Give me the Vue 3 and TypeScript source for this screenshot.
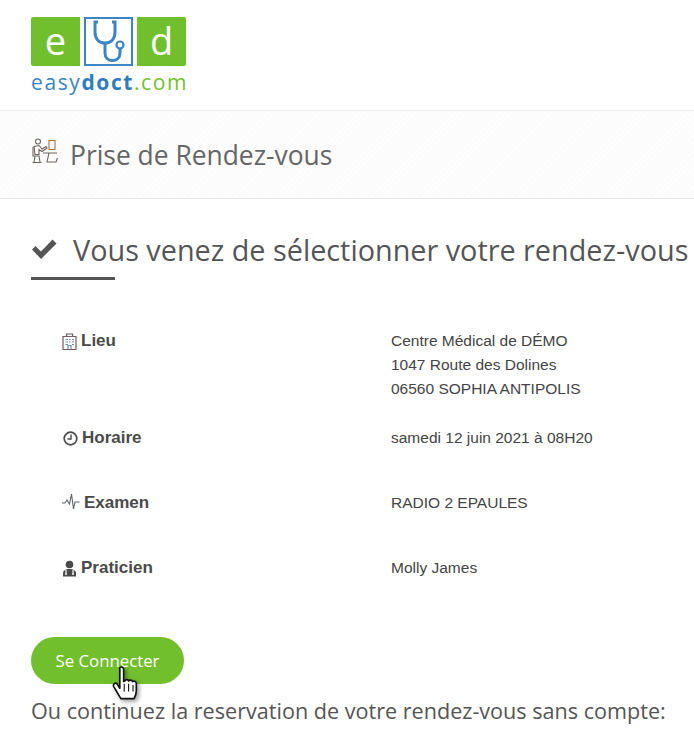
<template>
  <div class="page">
    <header class="top">
      <div class="logo">
        <div class="logo-tiles">
          <span class="tile tile-green tile-left">e</span>
          <span class="tile tile-blue">
            <svg width="45" height="45" viewBox="0 0 45 45" fill="none" stroke="#3b84c6" stroke-width="3">
              <path d="M12 3H9v10c0 7 4 11 10 11s10-4 10-11V3h-3" />
              <path d="M19 24v10c0 4.500 3 7.500 7.500 7.500S34 38.500 34 34v-4" />
              <circle cx="34" cy="26" r="3.500" stroke-width="2.200" />
            </svg>
          </span>
          <span class="tile tile-green tile-right">d</span>
        </div>
        <div class="logo-name"><span>easy</span><b>doct</b><span class="name-com">.com</span></div>
      </div>
    </header>

    <section class="band">
      <svg class="band-icon" width="27" height="26" viewBox="0 0 27 26" fill="none" stroke="#6d6460" stroke-width="1.100">
        <circle cx="7" cy="3.500" r="2.500" />
        <path d="M3 8.500l5-1 3 3.500 4-2.500 1 1.500-5 3.500-3-2v5H4z" />
        <path d="M2 9v9h6l1 6M4 18l-1 6M1.500 24.500h9" />
        <path d="M12 15h14M18 15l-2 9h9l1.500-4" />
        <path d="M18 2.500h6v9h-6z" stroke="#a8723f" />
      </svg>
      <h2 class="band-title">Prise de Rendez-vous</h2>
    </section>

    <main class="content">
      <h1 class="heading">
        <svg class="check" width="26" height="22" viewBox="0 0 26 22">
          <path d="M1 11.500l3.500-3.500 5.500 5.500L21.500 1.500 25.500 5.500 10 21z" fill="#555" />
        </svg>
        <span>Vous venez de sélectionner votre rendez-vous</span>
      </h1>
      <div class="rule"></div>

      <div class="details">
        <div v-for="row in rows" :key="row.label" class="row" :class="row.cls">
          <div class="label">
            <svg v-if="row.icon === 'building'" width="15" height="17" viewBox="0 0 15 17" fill="none" stroke="#6a5a5a" stroke-width="1.200">
              <path d="M1 3.500h13v13H1z" stroke="#7a5a60" />
              <path d="M4.500 3.500V1h6v2.500" />
              <path d="M3.500 6.500h2.500M7 6.500h1.500M10 6.500h2M3.500 9h2.500M7 9h1.500M10 9h2M3.500 11.500h2.500M10 11.500h2M6 16v-3.500h3V16" stroke="#6f8fb0" />
            </svg>
            <svg v-else-if="row.icon === 'clock'" width="16" height="15" viewBox="-1 0 16 15" fill="none" stroke="#4a4a4a" stroke-width="1.700">
              <circle cx="7.500" cy="7.500" r="6.300" />
              <path d="M8 3.500v4.500H4.500" stroke-width="1.400" />
            </svg>
            <svg v-else-if="row.icon === 'pulse'" class="pulse" width="18" height="17" viewBox="0 0 18 17" fill="none" stroke="#5f6468" stroke-width="1.100">
              <path d="M0 10h3l2-3 2.500 4L9.500 1l2 15 1.500-7h4.500" />
            </svg>
            <svg v-else width="15" height="17" viewBox="0 0 15 17">
              <circle cx="7.500" cy="4.500" r="3.800" fill="#4a4a4a" />
              <path d="M1 16.500v-3c0-3 2.500-4.500 6.500-4.500s6.500 1.500 6.500 4.500v3z" fill="#4a4a4a" />
              <path d="M4 10v3M11 10v3" stroke="#fff" stroke-width="1.200" />
              <circle cx="4" cy="14" r="1" fill="#fff" />
              <circle cx="11" cy="14" r="1" fill="#fff" />
            </svg>
            <span>{{ row.label }}</span>
          </div>
          <div class="value">
            <div v-for="line in row.lines" :key="line">{{ line }}</div>
          </div>
        </div>
      </div>

      <a class="connect">Se Connecter</a>
      <p class="note">Ou continuez la reservation de votre rendez-vous sans compte:</p>

      <svg class="cursor" width="33" height="42" viewBox="0 0 30 38">
        <path d="M8 2.500c1.500-1.500 3.500-.5 3.500 1.500v11l1-.5c1-2 3-1.500 3.500 0 1-1.500 3-1 3.500.5 1.500-1 3-.5 3.500 1.500v7c0 3-1 5-2 7H9l-6.500-11c-1-2 1.500-4 3-2.500L8 21z" fill="#fff" stroke="#111" stroke-width="1.500" stroke-linejoin="round" />
        <path d="M12 17v7M16 17v7M20 18v6" stroke="#111" stroke-width="1" />
      </svg>
    </main>
  </div>
</template>

<script setup lang="ts">
interface DetailRow {
  label: string
  icon: string
  lines: string[]
  cls: string
}

const rows: DetailRow[] = [
  {
    label: 'Lieu',
    icon: 'building',
    lines: ['Centre Médical de DÉMO', '1047 Route des Dolines', '06560 SOPHIA ANTIPOLIS'],
    cls: 'row-first',
  },
  { label: 'Horaire', icon: 'clock', lines: ['samedi 12 juin 2021 à 08H20'], cls: '' },
  { label: 'Examen', icon: 'pulse', lines: ['RADIO 2 EPAULES'], cls: '' },
  { label: 'Praticien', icon: 'doctor', lines: ['Molly James'], cls: '' },
]
</script>

<style>
html,
body {
  margin: 0;
  background: #fff;
  overflow: hidden;
}
</style>

<style scoped>
.page {
  width: 694px;
  height: 741px;
  overflow: hidden;
  font-family: "Open Sans", sans-serif;
  color: #555;
}

.top {
  height: 111px;
  padding: 17px 0 0 31px;
  box-sizing: border-box;
  border-bottom: 1px solid #eee;
}

.logo {
  width: 156px;
}

.logo-tiles {
  display: flex;
  gap: 4px;
}

.tile {
  width: 49px;
  height: 49px;
  box-sizing: border-box;
  display: flex;
  align-items: center;
  justify-content: center;
  font-size: 38px;
  font-weight: 500;
  color: #fff;
}

.tile-green {
  background: #72bf2e;
  padding-bottom: 4px;
}

.tile-left {
  border-radius: 2px 0 0 2px;
}

.tile-right {
  border-radius: 0 2px 2px 0;
}

.tile-blue {
  border: 2px solid #3b84c6;
}

.logo-name {
  margin-top: 3px;
  font-size: 21px;
  line-height: 27px;
  letter-spacing: 1.600px;
  white-space: nowrap;
  color: #3b84c6;
}

.logo-name b {
  color: #2f7dc1;
}

.name-com {
  color: #72bf2e;
}

.band {
  height: 88px;
  box-sizing: border-box;
  border-bottom: 1px solid #e8e8e8;
  display: flex;
  align-items: center;
  padding: 0 0 0 31px;
  gap: 12px;
  background: repeating-linear-gradient(135deg, #fbfbfb 0, #fbfbfb 2px, #fdfdfd 2px, #fdfdfd 4px);
}

.band-icon {
  margin-top: -7px;
}

.band-title {
  margin: 0;
  font-size: 26.400px;
  font-weight: 400;
  color: #666;
}

.content {
  position: relative;
  padding: 0 0 0 31px;
}

.heading {
  margin: 0;
  padding-top: 31px;
  display: flex;
  align-items: center;
  gap: 16px;
  height: 38px;
  font-size: 28.800px;
  font-weight: 400;
  white-space: nowrap;
  color: #555;
}

.rule {
  width: 84px;
  height: 3px;
  margin-top: 9px;
  background: #555;
}

.details {
  margin-top: 49px;
  padding-left: 31px;
}

.row {
  display: flex;
  padding-bottom: 41px;
  font-family: "Liberation Sans", Arial, sans-serif;
}

.row-first {
  padding-bottom: 25px;
}

.label {
  width: 329px;
  display: flex;
  align-items: center;
  gap: 4px;
  height: 24px;
  font-size: 17px;
  font-weight: 700;
  color: #4a4a4a;
}

.pulse {
  margin-top: -3px;
}

.value {
  font-size: 15.500px;
  line-height: 24px;
  color: #444;
}

.connect {
  display: flex;
  align-items: center;
  justify-content: center;
  width: 153px;
  height: 47px;
  margin-top: 16px;
  border-radius: 24px;
  background: #72bf2e;
  color: #fff;
  font-size: 16.800px;
  font-weight: 500;
}

.note {
  margin: 12px 0 0;
  font-size: 21.600px;
  line-height: 30px;
  white-space: nowrap;
  color: #555;
}

.cursor {
  position: absolute;
  left: 111px;
  top: 466px;
  filter: drop-shadow(2px 2px 2px rgba(0, 0, 0, 0.4));
}
</style>
